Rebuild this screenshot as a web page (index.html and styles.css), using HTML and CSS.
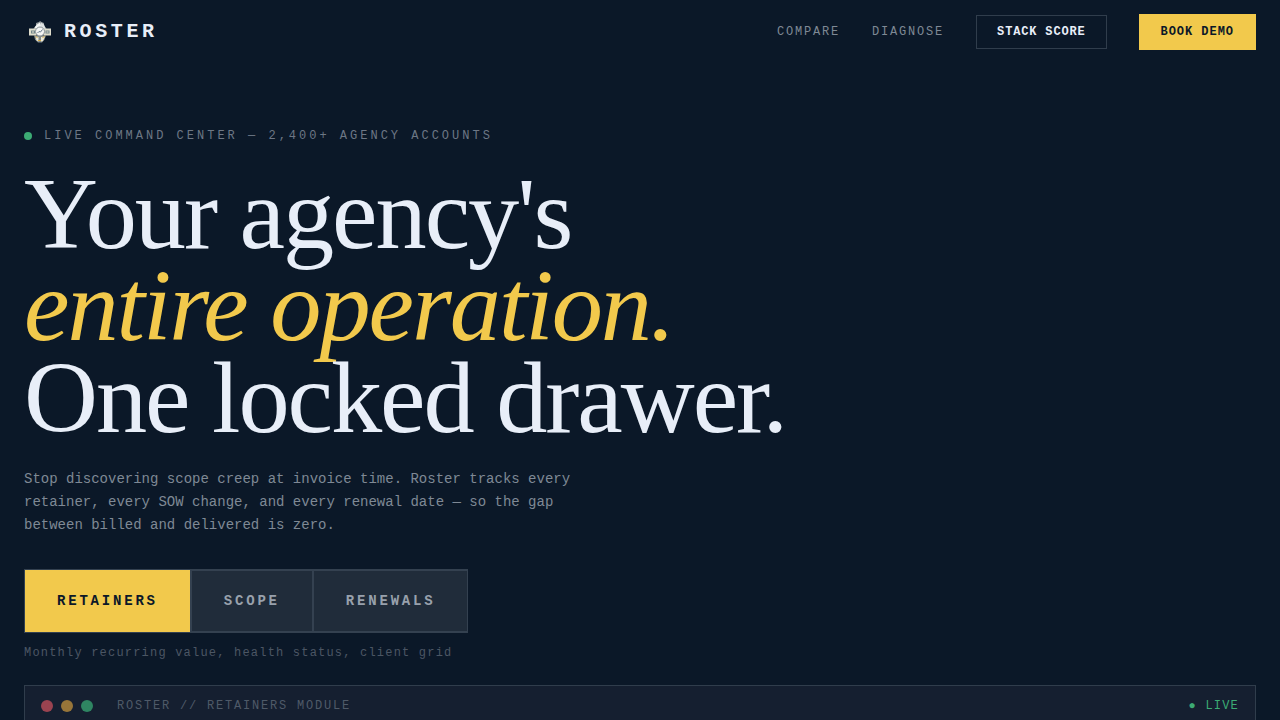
FILE: index.html
```html
<!DOCTYPE html>
<html lang="en">
<head>
  <meta charset="UTF-8">
  <meta name="viewport" content="width=device-width, initial-scale=1.0">
  <title>Roster</title>
  <link rel="stylesheet" href="styles.css">
</head>
<body>
  <header class="nav">
    <a class="brand" href="#">
      <svg class="brand-mark" viewBox="0 0 32 32" aria-hidden="true">
        <path d="M9.500 12.500L12 9.500V7l3-1 1-1 1.500 1L20 7v2.500l2.500 3-3 3h-7z" fill="#8f9699"/>
        <path d="M10.500 11.500l2.500-3 3-2 1.500 4-3.500 3z" fill="#f4f5f3"/>
        <path d="M17 6.500l3 2 1.500 4-3.500.5-1.500-3z" fill="#dfe3e3"/>
        <path d="M10 19.500h12l-1.500 4-2.500 3h-4l-3-3z" fill="#858c8b"/>
        <path d="M11.500 20.500l3 .5v4.500l-2-1zM17 21l4-.5-2 4.500-2 .5z" fill="#ece9d8"/>
        <path d="M5 12.500h7.500v7H5zM19.500 12.500H27v7h-7.500z" fill="#dedccb"/>
        <path d="M7 14.500h4v3H7zM21.500 14.500h4v3h-4z" fill="#71858b"/>
        <path d="M8 15.500h2v1H8zM22.500 15.500h2v1h-2z" fill="#e9e6d5"/>
        <circle cx="16" cy="15.500" r="4.500" fill="#f4f5f4" stroke="#8a9397"/>
        <path d="M13.500 17l1.500-1.500 1.500.5 2-2.500" fill="none" stroke="#64788a"/>
        <path d="M11.500 20.500l2 1M18.500 21.500l2-1M14 24.500h3" stroke="#d6ac48"/>
      </svg>
      <span>ROSTER</span>
    </a>
    <nav class="nav-links">
      <a class="nav-link" href="#">COMPARE</a>
      <a class="nav-link" href="#">DIAGNOSE</a>
      <a class="btn btn-outline" href="#">STACK SCORE</a>
      <a class="btn btn-gold" href="#">BOOK DEMO</a>
    </nav>
  </header>

  <main class="hero">
    <p class="eyebrow"><span class="pulse"></span>LIVE COMMAND CENTER — 2,400+ AGENCY ACCOUNTS</p>
    <h1 class="headline">Your agency's<br><em>entire operation.</em><br>One locked drawer.</h1>
    <p class="lede">Stop discovering scope creep at invoice time. Roster tracks every retainer, every SOW change, and every renewal date — so the gap between billed and delivered is zero.</p>

    <div class="tabs">
      <button type="button" class="tab active">RETAINERS</button>
      <button type="button" class="tab">SCOPE</button>
      <button type="button" class="tab">RENEWALS</button>
    </div>
    <p class="tab-note">Monthly recurring value, health status, client grid</p>

    <section class="module">
      <div class="module-bar">
        <div class="dots">
          <span class="dot red"></span>
          <span class="dot amber"></span>
          <span class="dot green"></span>
        </div>
        <span class="module-title">ROSTER // RETAINERS MODULE</span>
        <span class="module-live">● LIVE</span>
      </div>
    </section>
  </main>
</body>
</html>
```
FILE: styles.css
```css
* {
  box-sizing: border-box;
  margin: 0;
  padding: 0;
}

body {
  background: #0b1828;
  color: #e8eef8;
  font-family: "Liberation Mono", monospace;
}

a {
  color: inherit;
  text-decoration: none;
}

/* Navigation */
.nav {
  display: flex;
  align-items: center;
  justify-content: space-between;
  padding: 14px 24px;
}

.brand {
  display: flex;
  align-items: center;
  gap: 8px;
  font-size: 20px;
  line-height: 24px;
  font-weight: bold;
  letter-spacing: 0.18em;
}

.brand-mark {
  width: 32px;
  height: 32px;
}

.nav-links {
  display: flex;
  align-items: center;
  gap: 32px;
  font-size: 12px;
  line-height: 16px;
}

.nav-link {
  color: #7f8995;
  letter-spacing: 0.15em;
}

.btn {
  font-weight: bold;
  letter-spacing: 0.08em;
}

.btn-outline {
  padding: 8px 20px;
  border: 1px solid #303d4c;
  letter-spacing: 0.07em;
}

.btn-gold {
  padding: 10px 22px;
  background: #f2c94c;
  color: #0b1828;
}

/* Hero */
.hero {
  padding: 64px 24px 0;
}

.eyebrow {
  display: flex;
  align-items: center;
  gap: 12px;
  color: #6d7785;
  font-size: 12px;
  line-height: 16px;
  letter-spacing: 0.25em;
}

.pulse {
  width: 8px;
  height: 8px;
  border-radius: 50%;
  background: #3cab74;
}

.headline {
  margin-top: 24px;
  font-family: "Liberation Serif", serif;
  font-size: 8vw;
  line-height: 0.9;
  font-weight: normal;
  letter-spacing: -0.02em;
}

.headline em {
  color: #f2c94c;
}

.lede {
  max-width: 560px;
  margin-top: 24px;
  color: #7f8995;
  font-size: 14px;
  line-height: 23px;
}

/* Tabs */
.tabs {
  display: flex;
  width: fit-content;
  margin-top: 32px;
}

.tab {
  padding: 22px 32px;
  border: 1px solid #344150;
  border-width: 2px 1px;
  background: #202c3a;
  color: #98a1ac;
  font: bold 14px/16px "Liberation Mono", monospace;
  letter-spacing: 0.2em;
  cursor: pointer;
}

.tab.active {
  padding: 23px 32px;
  border-width: 1px;
  background: #f2c94c;
  color: #0b1828;
}

.tab-note {
  margin-top: 12px;
  color: #4b5664;
  font-size: 12px;
  line-height: 16px;
  letter-spacing: 0.1em;
}

/* Module window */
.module {
  margin-top: 24px;
  border: 1px solid #303d4c;
  border-bottom: 0;
  background: #151f30;
}

.module-bar {
  display: flex;
  align-items: center;
  padding: 12px 16px;
  font-size: 12px;
  line-height: 16px;
}

.dots {
  display: flex;
  gap: 8px;
  margin-right: 24px;
}

.dot {
  width: 12px;
  height: 12px;
  border-radius: 50%;
}

.red {
  background: #9a4350;
}

.amber {
  background: #977539;
}

.green {
  background: #2f8562;
}

.module-title {
  color: #4f5a68;
  letter-spacing: 0.15em;
}

.module-live {
  margin-left: auto;
  color: #3cab74;
  letter-spacing: 0.1em;
}
```
